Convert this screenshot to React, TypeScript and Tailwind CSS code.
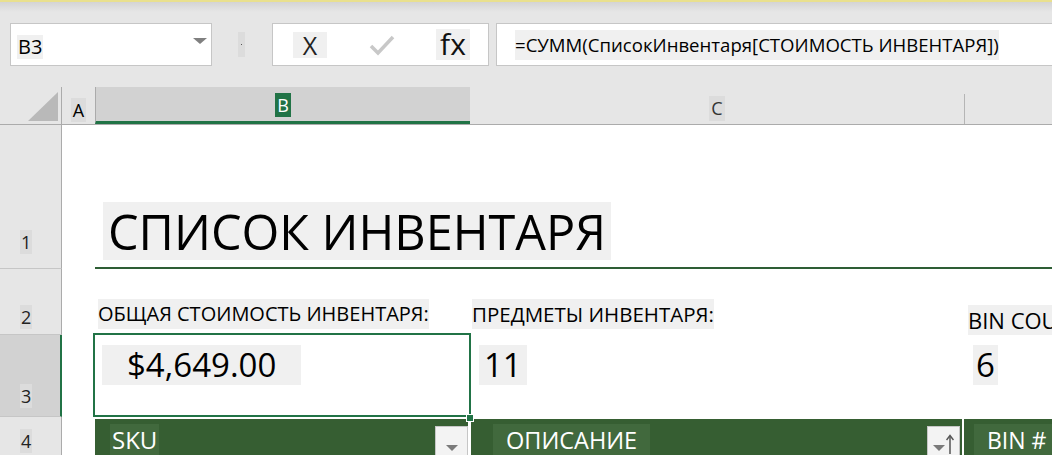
import React from "react";

const font = { fontFamily: '"Open Sans", "Noto Sans", sans-serif' };

function Toolbar() {
  return (
    <div className="h-[87px] bg-[#e6e6e6] relative">
      <div className="h-[2px] bg-[#e9e08e]" />
      <div className="h-[10px] bg-gradient-to-b from-[#d4d4d4] to-[#e6e6e6]" />
      <div className="flex items-start pt-[11px]">
        {/* name box */}
        <div className="ml-[10px] w-[202px] h-[43px] bg-white border border-[#c6c6c6] flex items-center justify-between pl-[6px] pr-[4px]">
          <span className="bg-[#f0f0f0] text-[20px] leading-[24px] px-[1px] mt-[4px] text-black">B3</span>
          <svg width="14" height="8" viewBox="0 0 14 8" className="mb-[6px]">
            <polygon points="0,0 14,0 7,6" fill="#808080" />
          </svg>
        </div>
        {/* separator */}
        <div className="ml-[26px] mt-[9px] w-[7px] h-[25px] bg-[#dcdcdc] flex items-center justify-center">
          <div className="w-[1px] h-[1px] bg-[#555]" />
        </div>
        {/* cancel / enter / fx */}
        <div className="ml-[27px] w-[217px] h-[43px] bg-white border border-[#c6c6c6] flex items-center">
          <span className="ml-[20px] w-[34px] h-[26px] bg-[#f0f0f0] flex items-end justify-center text-[25px] leading-[26px] text-[#222]">
            X
          </span>
          <svg width="26" height="22" viewBox="0 0 26 22" className="ml-[42px]">
            <polyline points="2,12 9,19 24,3" fill="none" stroke="#c8c8c8" strokeWidth="3.5" />
          </svg>
          <span className="ml-[41px] w-[34px] h-[31px] bg-[#f0f0f0] flex items-end justify-center text-[30px] leading-[32px] text-[#111]">
            fx
          </span>
        </div>
        {/* formula */}
        <div className="ml-[7px] flex-1 h-[43px] bg-white border border-[#c6c6c6] border-r-0 flex items-center pl-[18px]">
          <span className="bg-[#f0f0f0] text-[18.6px] leading-[30px] text-black whitespace-nowrap">
            =СУММ(СписокИнвентаря[СТОИМОСТЬ ИНВЕНТАРЯ])
          </span>
        </div>
      </div>
    </div>
  );
}

function ColumnHeaders() {
  return (
    <div className="h-[38px] flex bg-[#e6e6e6] border-b border-[#ababab] text-[18px]">
      <div className="w-[62px] shrink-0 border-r border-[#ababab] flex items-end justify-end pr-[3px] pb-[3px]">
        <svg width="30" height="29" viewBox="0 0 30 29">
          <polygon points="30,0 30,29 0,29" fill="#b9b9b9" />
        </svg>
      </div>
      <div className="w-[33px] shrink-0 flex items-end justify-center pb-[2px]">
        <span className="bg-[#dcdcdc] px-[2px] leading-[24px] text-black">A</span>
      </div>
      <div className="w-[375px] shrink-0 bg-[#d2d2d2] border-l border-[#ababab] border-b-[3px] border-b-[#217346] flex items-end justify-center pb-[4px]">
        <span className="bg-[#217346] text-white px-[2px] leading-[24px]">B</span>
      </div>
      <div className="w-[494px] shrink-0 flex items-end justify-center pb-[3px]">
        <span className="bg-[#dcdcdc] px-[2px] leading-[25px] text-[#333]">C</span>
      </div>
      <div className="flex-1 min-w-0 border-l border-[#b5b5b5] mt-[7px]" />
    </div>
  );
}

function RowHead({ n, h, pb, selected, last }: { n: number; h: string; pb: string; selected?: boolean; last?: boolean }) {
  return (
    <div
      className={`w-[62px] shrink-0 ${h} ${pb} ${selected ? "bg-[#d2d2d2] border-r-2 border-r-[#217346]" : "bg-[#e6e6e6] border-r border-r-[#ababab]"} ${last ? "" : "border-b border-b-[#c6c6c6]"} flex items-end pl-[20px] text-[18px] text-[#222]`}
    >
      <span className="bg-[#dcdcdc] leading-[24px] px-[1px]">{n}</span>
    </div>
  );
}

function Dropdown({ sort }: { sort?: boolean }) {
  return (
    <div className="w-[33px] h-[31px] shrink-0 bg-[#f3f3f3] border border-[#c6c6c6] flex items-end justify-center pb-[4px] gap-[1px]">
      <svg width="12" height="7" viewBox="0 0 12 7">
        <polygon points="0,0 12,0 6,6" fill="#7a7a7a" />
      </svg>
      {sort && (
        <svg width="8" height="20" viewBox="0 0 8 20" className="mb-[-2px]">
          <line x1="4" y1="2" x2="4" y2="20" stroke="#555" strokeWidth="1.5" />
          <polyline points="0.5,6 4,1.5 7.5,6" fill="none" stroke="#555" strokeWidth="1.5" />
        </svg>
      )}
    </div>
  );
}

export default function App() {
  return (
    <div className="w-[1052px] h-[455px] overflow-hidden bg-white" style={font}>
      <Toolbar />
      <ColumnHeaders />

      {/* row 1 */}
      <div className="flex">
        <RowHead n={1} h="h-[144px]" pb="pb-[14px]" />
        <div className="w-[33px] shrink-0" />
        <div className="flex-1 min-w-0 border-b-2 border-[#2e5e35] flex items-end pb-[7px] pl-[8px]">
          <span className="bg-[#f0f0f0] px-[5px] text-[48.6px] leading-[58px] text-black whitespace-nowrap">
            СПИСОК ИНВЕНТАРЯ
          </span>
        </div>
      </div>

      {/* row 2 */}
      <div className="flex">
        <RowHead n={2} h="h-[66px]" pb="pb-[5px]" />
        <div className="w-[33px] shrink-0" />
        <div className="w-[375px] shrink-0 flex items-end pb-[6px] pl-[3px]">
          <span className="bg-[#f0f0f0] text-[20px] leading-[30px] text-black whitespace-nowrap">ОБЩАЯ СТОИМОСТЬ ИНВЕНТАРЯ:</span>
        </div>
        <div className="w-[494px] shrink-0 flex items-end pb-[6px] pl-[2px]">
          <span className="bg-[#f0f0f0] text-[20.5px] leading-[30px] text-black whitespace-nowrap">ПРЕДМЕТЫ ИНВЕНТАРЯ:</span>
        </div>
        <div className="flex-1 min-w-0 flex items-end pb-[0px] pl-[4px] overflow-hidden">
          <span className="bg-[#f0f0f0] text-[22px] leading-[30px] text-black whitespace-nowrap">BIN COUNT</span>
        </div>
      </div>

      {/* row 3 */}
      <div className="flex">
        <RowHead n={3} h="h-[82px]" pb="pb-[8px]" selected />
        <div className="w-[33px] shrink-0" />
        <div className="w-[375px] shrink-0 relative flex items-start pt-[10px] pl-[7px]">
          <span className="bg-[#f0f0f0] pl-[25px] pr-[25px] text-[33px] leading-[40px] text-black">$4,649.00</span>
          <div className="absolute -left-[2px] -top-[2px] w-[378px] h-[84px] border-2 border-[#217346]" />
          <div className="absolute -right-[4px] -bottom-[5px] w-[8px] h-[8px] bg-[#217346] border border-white" />
        </div>
        <div className="w-[494px] shrink-0 flex items-start pt-[10px] pl-[9px]">
          <span className="bg-[#f0f0f0] px-[5px] text-[33px] leading-[40px] text-black">11</span>
        </div>
        <div className="flex-1 min-w-0 flex items-start pt-[10px] pl-[9px]">
          <span className="bg-[#f0f0f0] px-[3px] text-[33px] leading-[40px] text-black">6</span>
        </div>
      </div>

      {/* row 4 */}
      <div className="flex">
        <RowHead n={4} h="h-[40px]" pb="pb-[4px]" last />
        <div className="w-[33px] shrink-0 bg-white" />
        <div className="w-[373px] shrink-0 h-[40px] mt-[2px] bg-[#365e32] flex items-end justify-between pl-[15px] pb-[2px]">
          <span className="bg-[#41693d] px-[2px] text-[24px] leading-[32px] text-white mb-[1px]">SKU</span>
          <Dropdown />
        </div>
        <div className="w-[494px] shrink-0 h-[40px] mt-[2px] bg-[#365e32] border-l-[3px] border-white flex items-end justify-between pl-[22px] pr-[2px] pb-[2px]">
          <span className="bg-[#41693d] px-[13px] text-[23.5px] leading-[32px] text-white mb-[1px] whitespace-nowrap">ОПИСАНИЕ</span>
          <Dropdown sort />
        </div>
        <div className="flex-1 min-w-0 overflow-hidden h-[40px] mt-[2px] bg-[#365e32] border-l-2 border-white flex items-end pl-[10px] pb-[3px]">
          <span className="bg-[#41693d] px-[13px] text-[23px] leading-[32px] text-white whitespace-nowrap">BIN #</span>
        </div>
      </div>
    </div>
  );
}
